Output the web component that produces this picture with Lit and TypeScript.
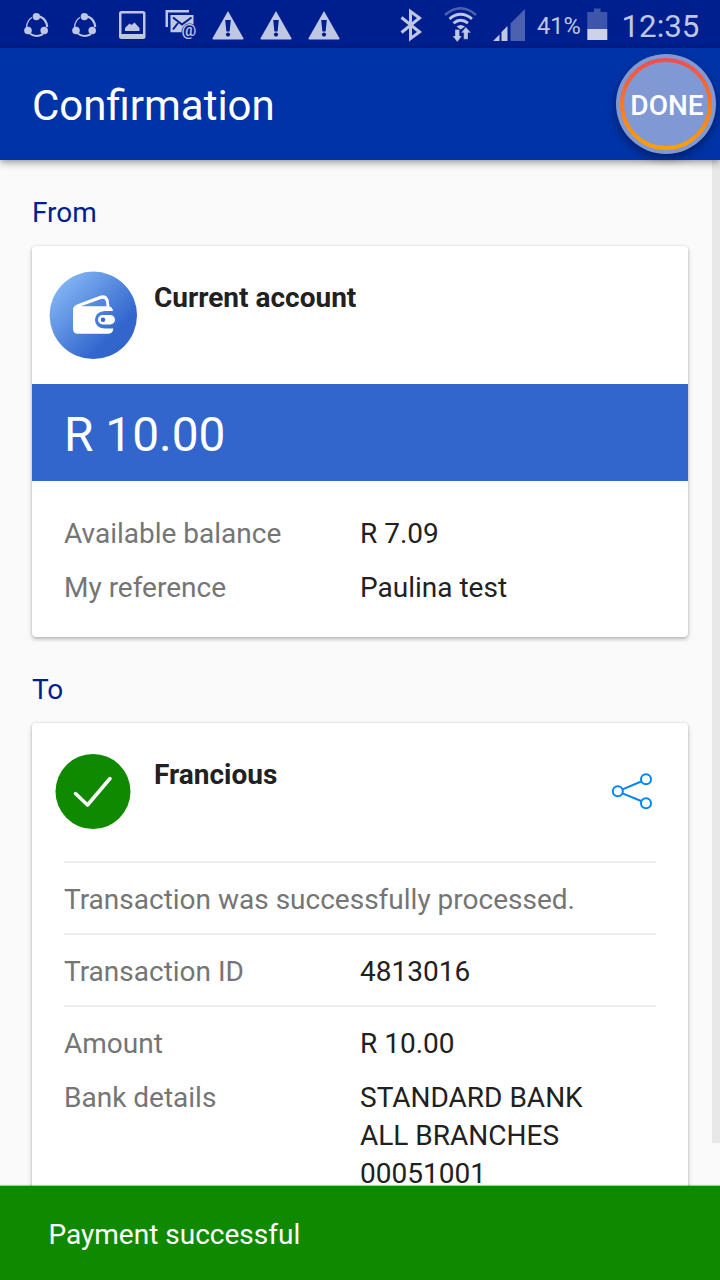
import { LitElement, html, svg, css } from "lit";
import { customElement, property } from "lit/decorators.js";

const ring = svg`<path d="M26.600 27Q27 20.500 32 17.500" fill="none" stroke="currentColor" stroke-width="1.300"/>
  <path d="M40 16.500Q47 20 47.200 27" fill="none" stroke="currentColor" stroke-width="2.200"/>
  <path d="M30 33.800Q36 38 43 34.200" fill="none" stroke="currentColor" stroke-width="2"/>
  <circle cx="36.400" cy="16.600" r="3.700"/><circle cx="28" cy="30.500" r="3.800"/><circle cx="44.200" cy="30.500" r="3.800"/>`;

const picture = svg`<path fill-rule="evenodd" d="M121.500 11H143Q145.500 11 145.500 13.500V36.500Q145.500 39 143 39H121.500Q119 39 119 36.500V13.500Q119 11 121.500 11ZM121.500 13.500V34H143V13.500Z"/>
  <path d="M125 31V28L129.500 23.500L131.500 25L134.500 22.500L139.500 28V31Z"/>`;

const mail = svg`<path d="M165.500 10H189V12.500H168V27H165.500Z"/>
  <path fill-rule="evenodd" d="M170.500 15H193.500V24.500Q189 22.500 185 25Q181.500 28 181.500 32.200H170.500Z"/>
  <path d="M173 17.500L182 24.500L191.500 17.500M173 29.500L178 23" fill="none" stroke="#001f8f" stroke-width="2"/>
  <text x="181.600" y="36" font-size="16.500" font-weight="500" font-family="Roboto, sans-serif">@</text>`;

const warning = svg`<path d="M228 11L243.600 38.500Q243.800 39.600 242.500 39.600H213.500Q212.200 39.600 212.400 38.500Z"/>
  <path d="M225.200 20H230.800L229.600 31.500H226.400Z" fill="#001f8f"/><circle cx="228" cy="34.600" r="2.100" fill="#001f8f"/>`;

const bluetooth = svg`<path d="M401.500 17.500L419.500 32L410.500 38.500V11.500L419.500 18L401.500 32.500" fill="none" stroke="currentColor" stroke-width="3"/>`;

const wifi = svg`<g fill="none" stroke="currentColor">
  <path d="M445 15Q460.500 1.500 476 15" stroke-width="2.500" opacity=".4"/>
  <path d="M449.500 18.800Q460.500 9.800 472 18.800" stroke-width="2.800"/>
  <path d="M453.500 23.200Q460.500 17.200 468 23.200" stroke-width="2.800"/></g>
  <path d="M456.500 26.600Q460.700 23.200 465 26.600L460.700 29.500Z"/>
  <path d="M455 29.500H459.500V36H462L457.300 42L452.500 36H455Z M463.700 39.200V32.800H461L465.800 27L471 32.800H468V39.200Z" stroke="#001f8f" stroke-width=".3"/>`;

const signal = svg`<path d="M493 41L499.500 34.500V41Z M501.500 32L507.500 26V41H501.500Z"/>
  <path d="M510.500 23.500L525 9V41H510.500Z" opacity=".4"/>`;

const battery = svg`<path d="M594 8.500H600.500V12H607.300V29H587.300V12H594Z" opacity=".32"/>
  <path d="M587.300 29H607.300V40H587.300Z" fill="#cdd2e9"/>`;

@customElement("status-bar")
class StatusBar extends LitElement {
  static styles = css`
    :host { display: flex; height: 48px; box-sizing: border-box; padding-left: 22px; background: #001f8f; color: #bfc7e3;
      font-family: Roboto, sans-serif; }
    svg { display: block; fill: currentColor; flex: none; }
    .tray { display: flex; flex: none; }
    .radios { display: flex; flex: none; margin-left: 42px; }
    .percent { width: 50px; font-size: 23.600px; line-height: 52px; white-space: nowrap; }
    .clock { font-size: 31.300px; line-height: 53px; margin-left: 10.500px; white-space: nowrap; }
  `;
  private icon(x: number, w: number, art: unknown) {
    return html`<svg width=${w} height="48" viewBox="${x} 0 ${w} 48">${art}</svg>`;
  }
  render() {
    return html`
      <div class="tray">
        ${this.icon(22, 48, ring)}${this.icon(22, 48, ring)}
        ${this.icon(118, 46, picture)}${this.icon(164, 40, mail)}
        ${[0, 1, 2].map(() => this.icon(204, 48, warning))}
      </div>
      <div class="radios">
        ${this.icon(390, 46, bluetooth)}${this.icon(436, 50, wifi)}${this.icon(486, 51, signal)}
        <span class="percent">41%</span>${this.icon(587, 24, battery)}
      </div>
      <span class="clock">12:35</span>`;
  }
}

@customElement("detail-row")
class DetailRow extends LitElement {
  @property() label = "";
  @property({ attribute: false }) lines: string[] = [];
  static styles = css`
    :host { display: grid; grid-template-columns: 296px 1fr; font-size: 28px; line-height: 38px; }
    .label { color: #757575; }
    .value { color: #212121; }
  `;
  render() {
    return html`<div class="label">${this.label}</div>
      <div class="value">${this.lines.map((l) => html`<div>${l}</div>`)}</div>`;
  }
}

@customElement("app-root")
class AppRoot extends LitElement {
  static styles = css`
    :host { display: flex; flex-direction: column; position: relative; width: 720px; height: 1280px; overflow: hidden;
      background: #fafafa; font-family: Roboto, sans-serif; color: #212121; }
    .appbar { flex: none; height: 112px; box-sizing: border-box; padding: 0 4px 0 32px; display: flex; align-items: center;
      justify-content: space-between; background: #0033a8; box-shadow: 0 2px 8px rgba(0,0,0,.45); z-index: 1; }
    .title { margin: 0; font-size: 42px; line-height: 56px; font-weight: 400; color: #fff; padding-top: 3px; }
    .done { position: relative; width: 100px; height: 100px; border: 0; padding: 0; border-radius: 50%; background: #8098d4;
      color: #fff; box-shadow: 0 4px 10px rgba(0,0,0,.4); font: 500 28px/104px Roboto, sans-serif; }
    .done svg { position: absolute; left: 0; top: 0; }
    .done span { position: relative; display: block; height: 100px; padding-left: 2px; white-space: nowrap; }
    .content { flex: 1; min-height: 0; padding: 34px 32px 0; overflow: hidden; }
    .section { font-size: 28px; line-height: 38px; color: #001f8f; font-weight: 400; margin: 0 0 14px; }
    .card { background: #fff; border-radius: 4px; box-shadow: 0 2px 4px rgba(0,0,0,.28), 0 0 2px rgba(0,0,0,.12); }
    .from { height: 391px; margin-bottom: 34px; }
    .to { height: 560px; box-sizing: border-box; padding: 0 32px; }
    .head { display: flex; height: 138px; }
    .from .head svg { margin: 25px 17px 0; }
    .to .head svg { flex: none; }
    .to .tick { margin: 31px 23px 0 -9px; }
    .to .share { margin: 48px 3px 0 auto; }
    .name { margin: 33px 0 0; font-size: 28px; line-height: 38px; font-weight: 700; }
    .amount { height: 97px; box-sizing: border-box; padding-left: 32px; background: #3266cd; color: #fff; font-size: 47.800px; line-height: 103px; }
    .details { padding: 34px 32px 0; display: grid; gap: 16px; }
    .ruled { border-top: 2px solid #eee; padding: 18px 0 14px; }
    .note { font-size: 28px; line-height: 38px; color: #757575; }
    .last { display: grid; gap: 16px; }
    .scroll { position: absolute; right: 0; top: 160px; width: 8px; height: 983px; background: #e8e8e8; }
    .snackbar { flex: none; height: 94px; box-sizing: border-box; padding-left: 48.500px; background: #0f8a00; color: #fff;
      font-size: 28px; line-height: 97px; box-shadow: 0 -1px 1px rgba(0,0,0,.25); z-index: 1; }
  `;
  render() {
    return html`
      <status-bar></status-bar>
      <header class="appbar">
        <h1 class="title">Confirmation</h1>
        <button class="done">
          <svg width="100" height="100"><defs><linearGradient id="rim" x1="0" y1="0" x2="0" y2="1">
            <stop offset="0" stop-color="#eb5050"/><stop offset="1" stop-color="#ffa000"/></linearGradient></defs>
            <circle cx="50" cy="50" r="44" fill="none" stroke="url(#rim)" stroke-width="4"/></svg>
          <span>DONE</span>
        </button>
      </header>
      <main class="content">
        <h2 class="section">From</h2>
        <section class="card from">
          <div class="head">
            <svg width="88" height="88" viewBox="0 0 88 88">
              <defs><linearGradient id="disc" x1=".1" y1=".15" x2=".7" y2=".75">
                <stop offset="0" stop-color="#82b5f3"/><stop offset="1" stop-color="#3266cd"/></linearGradient></defs>
              <circle cx="44.300" cy="44.300" r="43.700" fill="url(#disc)"/>
              <path fill="#fff" fill-rule="evenodd" d="M24 39Q24 35 28 33.500L51 24.800Q57 22.800 59.500 28.500L60.500 35.600Q63.500 36.500 64 40H55.500Q46 41 46 48.700Q46 56.500 55.500 57.500H64.300Q64 62.800 58.500 62.800H29Q24 62.800 24 57.500ZM32 35.300H57.500L57 31Q56.300 27 52 28Z"/>
              <rect x="49" y="44" width="17" height="9.400" rx="4.700" fill="#fff"/>
              <circle cx="54" cy="48.700" r="2.200" fill="#3266cd"/>
            </svg>
            <h3 class="name">Current account</h3>
          </div>
          <div class="amount">R 10.00</div>
          <div class="details">
            <detail-row label="Available balance" .lines=${["R 7.09"]}></detail-row>
            <detail-row label="My reference" .lines=${["Paulina test"]}></detail-row>
          </div>
        </section>
        <h2 class="section">To</h2>
        <section class="card to">
          <div class="head">
            <svg class="tick" width="76" height="76" viewBox="0 0 76 76">
              <circle cx="38" cy="37.500" r="37.500" fill="#0f8a00"/>
              <path d="M20.500 39.500L32.500 51L55 24.500" fill="none" stroke="#fff" stroke-width="3.500" stroke-linecap="round" stroke-linejoin="round"/>
            </svg>
            <h3 class="name">Francious</h3>
            <svg class="share" width="42" height="40" viewBox="611 771 42 40" fill="none" stroke="#0084ff" stroke-width="2">
              <circle cx="617.800" cy="791.300" r="5"/><circle cx="646" cy="779.300" r="5"/><circle cx="646" cy="803.300" r="5"/>
              <path d="M622.500 789.300L641.200 781.500M622.500 793.300L641.200 801"/>
            </svg>
          </div>
          <div class="ruled note">Transaction was successfully processed.</div>
          <div class="ruled"><detail-row label="Transaction ID" .lines=${["4813016"]}></detail-row></div>
          <div class="ruled last">
            <detail-row label="Amount" .lines=${["R 10.00"]}></detail-row>
            <detail-row label="Bank details" .lines=${["STANDARD BANK", "ALL BRANCHES", "00051001"]}></detail-row>
          </div>
        </section>
      </main>
      <div class="scroll"></div>
      <footer class="snackbar">Payment successful</footer>`;
  }
}
